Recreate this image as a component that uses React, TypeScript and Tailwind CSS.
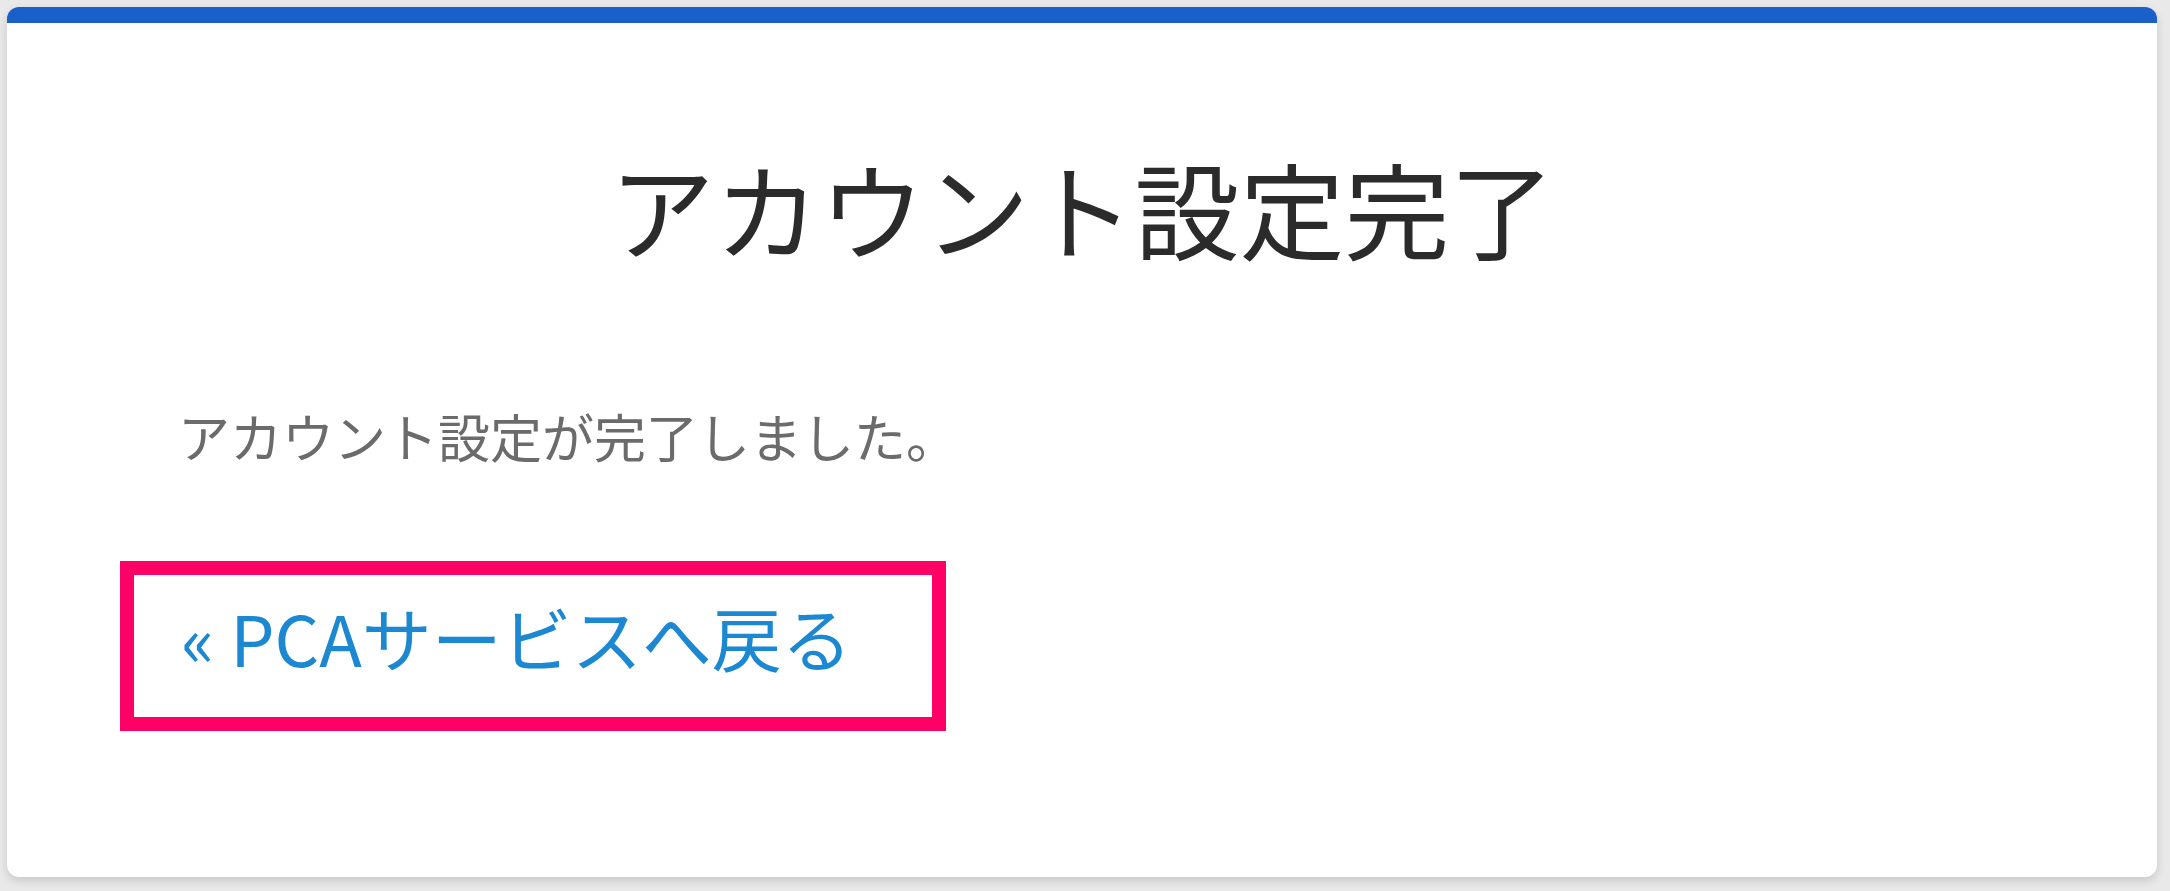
export default function App() {
  return (
    <div
      className="min-h-screen bg-[#e9e9ea] pt-[7px] pl-[7px]"
      style={{ fontFamily: '"Noto Sans CJK JP", "Noto Sans", sans-serif' }}
    >
      <div className="flex h-[870px] w-[2150px] flex-col rounded-[12px] border-t-[16px] border-[#1b5fc9] bg-white shadow-[0_4px_10px_rgba(0,0,0,0.14)]">
        <h1 className="mt-[131px] text-center text-[105px] leading-none font-normal text-[#2b2b2b]">
          アカウント設定完了
        </h1>
        <p className="mt-[151px] pl-[171px] text-[52px] leading-none text-[#6b6b6b]">
          アカウント設定が完了しました。
        </p>
        <div className="mt-[99px] ml-[113px] flex h-[170px] w-[826px] items-start border-[14px] border-[#ff0066] pt-[27px] pl-[47px]">
          <a href="#" className="text-[70px] leading-none text-[#1c88d2]">
            « PCAサービスへ戻る
          </a>
        </div>
      </div>
    </div>
  );
}
